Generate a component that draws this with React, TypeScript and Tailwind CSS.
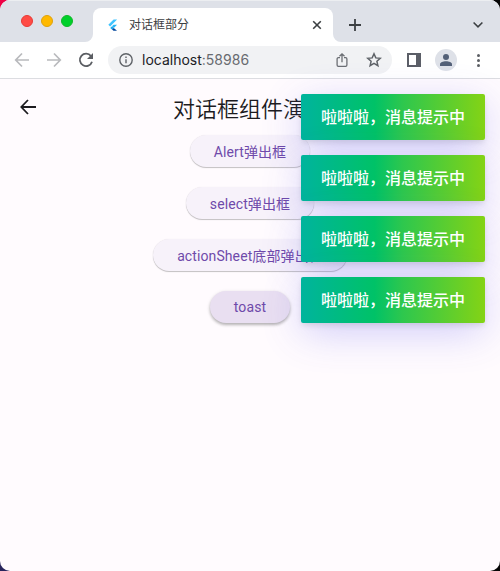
import React from 'react';

const cjk = "font-['Roboto','Noto_Sans_CJK_SC',sans-serif]";

function TrafficLights() {
  return (
    <div className="flex gap-2 pl-[21px] pt-[15px]">
      <span className="size-3 rounded-full border border-[#e83a36] bg-[#ff4b45]" />
      <span className="size-3 rounded-full border border-[#dfa20b] bg-[#ffb900]" />
      <span className="size-3 rounded-full border border-[#0fb828] bg-[#00d02b]" />
    </div>
  );
}

function Tab() {
  return (
    <div className="relative ml-5 mt-2 flex h-[34px] w-60 items-center rounded-t-lg bg-white pl-[14px] pr-[11px]">
      <svg className="absolute -left-2 bottom-0" width="8" height="8"><path d="M8 0v8H0a8 8 0 0 0 8-8z" fill="#fff" /></svg>
      <svg className="absolute -right-2 bottom-0" width="8" height="8"><path d="M0 0v8h8a8 8 0 0 1-8-8z" fill="#fff" /></svg>
      <svg width="12" height="12" viewBox="0 0 12 12">
        <path d="M6.6.5h3.5L3.1 7.4 1.3 5.7z" fill="#40c4ff" />
        <path d="M6.6 5.7h3.5L6.8 8.9 5 7.3z" fill="#29b6f6" />
        <path d="M5 7.3l1.8 1.6-1.8 1.7-1.8-1.6z" fill="#18a8f0" />
        <path d="M6.8 8.9l3.2 2.8H6.5L5 10.6z" fill="#01459b" />
      </svg>
      <span className="ml-[10px] text-[12px] leading-4 text-[#3c4043]">对话框部分</span>
      <svg className="ml-auto" width="10" height="10" viewBox="0 0 10 10" fill="none" stroke="#3c4043" strokeWidth="1.6"><path d="M1.2 1.2l7.6 7.6M8.8 1.2L1.2 8.8" /></svg>
    </div>
  );
}

function Toolbar() {
  return (
    <div className="flex h-[37px] items-center border-b border-[#dcdde1] bg-white pl-[14px]">
      <svg width="16" height="16" viewBox="0 0 16 16" fill="none" stroke="#b9babd" strokeWidth="1.7"><path d="M15 8H2M8 1.5L1.7 8 8 14.5" /></svg>
      <svg className="ml-4" width="16" height="16" viewBox="0 0 16 16" fill="none" stroke="#b9babd" strokeWidth="1.7"><path d="M1 8h13M8 1.5L14.3 8 8 14.5" /></svg>
      <svg className="ml-4" width="16" height="16" viewBox="0 0 16 16">
        <path d="M13 4.1A6.2 6.2 0 1 0 14 9.7" fill="none" stroke="#5b5e63" strokeWidth="1.8" />
        <path d="M15 1v6H9z" fill="#5b5e63" />
      </svg>
      <div className="ml-[14px] flex h-7 w-[284px] items-center rounded-full bg-[#f1f2f4] pl-[11px] pr-[10px]">
        <svg width="14" height="14" viewBox="0 0 14 14" fill="none" stroke="#5f6368" strokeWidth="1.4"><circle cx="7" cy="7" r="6.2" /><path d="M7 6.3v4M7 3.5v1.4" /></svg>
        <span className="ml-[9px] font-['Inter',sans-serif] text-[14px] leading-5 text-[#202124]">localhost<span className="text-[#686b70]">:58986</span></span>
        <svg className="ml-auto" width="12" height="16" viewBox="0 0 12 16" fill="none" stroke="#6c6f74" strokeWidth="1.3"><path d="M4 5.7H2.4a1.3 1.3 0 0 0-1.3 1.3v6a1.3 1.3 0 0 0 1.3 1.3h7.2a1.3 1.3 0 0 0 1.3-1.3V7a1.3 1.3 0 0 0-1.3-1.3H8M6 10.2V2M3.5 4.3L6 1.8l2.5 2.5" /></svg>
        <svg className="ml-[18px]" width="16" height="16" viewBox="0 0 16 16" fill="none" stroke="#5f6368" strokeWidth="1.5"><path d="M8 1.8l1.8 4.1 4.5.4-3.4 3 1 4.4L8 11.4l-3.9 2.3 1-4.4-3.4-3 4.5-.4z" /></svg>
      </div>
      <svg className="ml-[15px]" width="14" height="14"><path d="M0 0h14v14H0zM2 2v10h7V2z" fillRule="evenodd" fill="#5b5e67" /></svg>
      <div className="ml-[14px] flex size-[22px] items-center justify-center rounded-full bg-[#dee1e8]">
        <svg width="12" height="12" fill="#536077"><circle cx="6" cy="3" r="3" /><path d="M0 12v-1.7C0 8.4 3 7.3 6 7.3s6 1.1 6 3V12z" /></svg>
      </div>
      <svg className="ml-[20px]" width="3" height="13" fill="#5b5e63"><circle cx="1.5" cy="1.5" r="1.5" /><circle cx="1.5" cy="6.5" r="1.5" /><circle cx="1.5" cy="11.5" r="1.5" /></svg>
    </div>
  );
}

function PillButton({ label, width, raised = false }: { label: string; width: string; raised?: boolean }) {
  const look = raised
    ? 'bg-[#e9dff1] shadow-[0_2px_3px_rgba(0,0,0,0.24),0_1px_4px_rgba(0,0,0,0.1)]'
    : 'bg-[#f7f2fa] pt-[2px] shadow-[0_1px_1px_rgba(0,0,0,0.23),0_0_1px_rgba(0,0,0,0.1)]';
  return (
    <button className={`flex h-8 items-center justify-center whitespace-nowrap rounded-full text-[14px] leading-5 tracking-[0.1px] text-[#6f4aaa] ${width} ${look}`}>
      {label}
    </button>
  );
}

function Toast() {
  return (
    <div className="flex h-[46px] w-[184px] items-center justify-center rounded-[2px] bg-[linear-gradient(to_right,#00b49d_0%,#00c267_40%,#2dc74e_55%,#84d315_100%)] pt-[2px] text-[16px] font-medium leading-[22px] text-white shadow-[0_3px_6px_-1px_rgba(0,0,0,0.12),0_10px_40px_-2px_rgba(86,84,235,0.3)]">
      啦啦啦，消息提示中
    </div>
  );
}

export default function App() {
  return (
    <div className="h-[571px] w-[500px] overflow-hidden bg-[linear-gradient(to_right,#f00045_0%,#16122e_50%,#050505_100%)]">
      <div className="h-full bg-[linear-gradient(to_right,#28245c,#050505)] bg-[length:100%_50%] bg-bottom bg-no-repeat">
        <div className={`relative flex h-full flex-col overflow-hidden rounded-[10px] bg-[#fffbfe] ${cjk}`}>
          <header className="flex h-[42px] shrink-0 bg-[#dee1e8] shadow-[inset_0_1px_0_#eceef1]">
            <TrafficLights />
            <Tab />
            <svg className="ml-4 mt-[19px]" width="12" height="12" stroke="#3c4043" strokeWidth="1.8"><path d="M6 0v12M0 6h12" /></svg>
            <svg className="ml-auto mr-[17px] mt-[21px]" width="10" height="8" viewBox="0 0 10 8" fill="none" stroke="#3c4043" strokeWidth="1.6"><path d="M.6 1.5L5 5.8l4.4-4.3" /></svg>
          </header>
          <Toolbar />
          <main className="relative flex-1">
            <div className="grid h-14 grid-cols-[56px_1fr_56px] items-center">
              <svg className="ml-5" width="16" height="16" viewBox="0 0 16 16" fill="none" stroke="#1c1b1f" strokeWidth="1.8"><path d="M16 8H1.6M8 1L1.3 8 8 15" /></svg>
              <h1 className="pt-[6px] text-center text-[22px] font-[350] leading-7 text-[#1c1b1f]">对话框组件演示</h1>
            </div>
            <div className="flex flex-col items-center gap-5">
              <PillButton label="Alert弹出框" width="w-[120px]" />
              <PillButton label="select弹出框" width="w-[128px]" />
              <PillButton label="actionSheet底部弹出框" width="w-[194px]" />
              <PillButton label="toast" width="w-[80px]" raised />
            </div>
            <div className="absolute right-[15px] top-[15px] flex flex-col gap-[15px]">
              <Toast />
              <Toast />
              <Toast />
              <Toast />
            </div>
          </main>
        </div>
      </div>
    </div>
  );
}
